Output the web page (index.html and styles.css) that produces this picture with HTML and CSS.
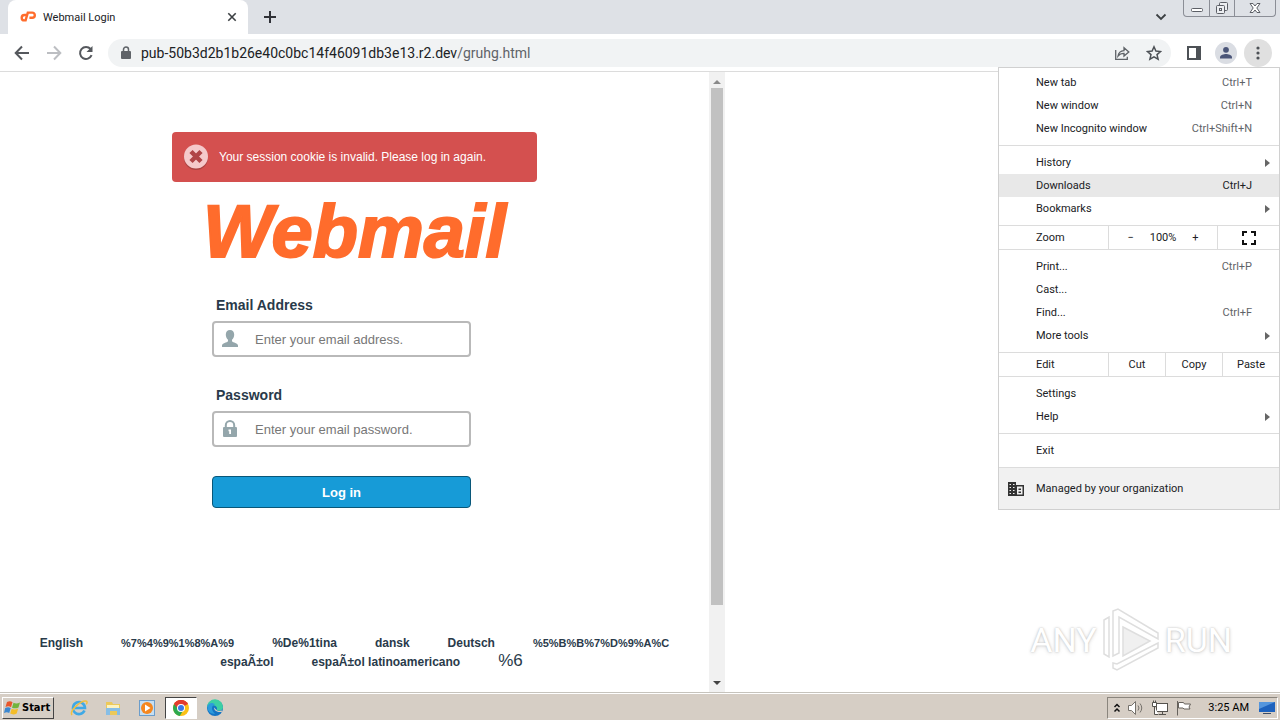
FILE: index.html
```html
<!DOCTYPE html>
<html lang="en">
<head>
    <meta charset="UTF-8">
    <meta name="viewport" content="width=device-width, initial-scale=1.0">
    <title>Webmail Login</title>
    <link rel="stylesheet" href="styles.css">
</head>
<body>
    <div class="browser">
        <!-- Tab strip -->
        <header class="tabstrip">
            <div class="tab">
                <svg class="favicon" width="16" height="16" viewBox="0 0 16 16" fill="none" stroke="#ff6c2c" stroke-width="2.4">
                    <path d="M6.6 6H4.400a2.700 2.700 0 0 0 0 5.400h1.200L7.800 3.600h4.400a2.500 2.500 0 0 1 0 5.200H9.400"/>
                </svg>
                <span class="tab-title">Webmail Login</span>
                <button class="icon-btn" aria-label="Close tab">
                    <svg width="10" height="10" viewBox="0 0 10 10" stroke="#3c4043" stroke-width="1.6"><path d="M1.300 1.300l7.400 7.400M8.700 1.300L1.300 8.700"/></svg>
                </button>
            </div>
            <button class="icon-btn new-tab" aria-label="New tab">
                <svg width="14" height="14" viewBox="0 0 14 14" stroke="#303238" stroke-width="2"><path d="M7 1v12M1 7h12"/></svg>
            </button>
            <button class="icon-btn tab-search" aria-label="Search tabs">
                <svg width="12" height="8" viewBox="0 0 12 8" fill="none" stroke="#3c4043" stroke-width="1.8"><path d="M1.500 1.500L6 6l4.500-4.500"/></svg>
            </button>
            <div class="window-buttons">
                <button aria-label="Minimize">
                    <svg width="14" height="14" viewBox="0 0 14 14" fill="#fff" stroke="#5c5f66"><rect x="1.500" y="7.500" width="11" height="3" rx="1"/></svg>
                </button>
                <button aria-label="Restore">
                    <svg width="14" height="14" viewBox="0 0 14 14" fill="#eceef1" stroke="#5c5f66"><rect x="4.500" y="1.500" width="8" height="8" rx="1"/><rect x="1.500" y="4.500" width="8" height="8" rx="1"/><rect x="4.500" y="7.500" width="2" height="2"/></svg>
                </button>
                <button class="wide" aria-label="Close">
                    <svg width="14" height="14" viewBox="0 0 14 14" fill="#fff" stroke="#5c5f66"><path d="M2 2.500h3l2 2.500 2-2.500h3L8.800 7l3.200 4.500H9L7 9l-2 2.500H2L5.200 7z"/></svg>
                </button>
            </div>
        </header>

        <!-- Toolbar -->
        <div class="toolbar">
            <button class="nav-btn" aria-label="Back">
                <svg width="16" height="16" viewBox="0 0 16 16" fill="none" stroke="#55585d" stroke-width="2"><path d="M15 8H2M8 1.500L1.700 8 8 14.500"/></svg>
            </button>
            <button class="nav-btn" aria-label="Forward">
                <svg width="16" height="16" viewBox="0 0 16 16" fill="none" stroke="#bcbec2" stroke-width="2"><path d="M1 8h13M8 1.500L14.300 8 8 14.500"/></svg>
            </button>
            <button class="nav-btn" aria-label="Reload">
                <svg width="16" height="16" viewBox="0 0 16 16" fill="none" stroke="#55585d" stroke-width="2"><path d="M13.600 10.200A6 6 0 1 1 12.600 4"/><path d="M14.500 1v6h-6z" fill="#55585d" stroke="none"/></svg>
            </button>
            <div class="omnibox">
                <svg width="10" height="14" viewBox="0 0 10 14"><rect y="5" width="10" height="8" rx="1" fill="#5f6368"/><path d="M2.500 6V3.500a2.500 2.500 0 0 1 5 0V6" fill="none" stroke="#5f6368" stroke-width="1.500"/></svg>
                <span class="url">pub-50b3d2b1b26e40c0bc14f46091db3e13.r2.dev<span class="path">/gruhg.html</span></span>
                <button class="icon-btn" aria-label="Share">
                    <svg width="16" height="16" viewBox="0 0 16 16" fill="none" stroke="#5f6368" stroke-width="1.300"><path d="M1.700 5v9.300h11.600v-2.500"/><path d="M4 11c.6-3.600 2.600-5.200 6-5.400V2.800L14.800 7 10 11V8.400c-2.600 0-4.400.6-6 2.600z"/></svg>
                </button>
                <button class="icon-btn" aria-label="Bookmark this tab">
                    <svg width="16" height="16" viewBox="0 0 16 16" fill="none" stroke="#4d5156" stroke-width="1.500"><path d="M8 1.800l1.900 4.300 4.600.4-3.500 3.100 1.100 4.600L8 11.800l-4.100 2.400L5 9.600 1.500 6.500l4.600-.4z"/></svg>
                </button>
            </div>
            <button class="nav-btn" aria-label="Side panel">
                <svg width="14" height="14" viewBox="0 0 14 14"><path d="M0 0h14v14H0zM2 2v10h7V2z" fill="#4d5156" fill-rule="evenodd"/></svg>
            </button>
            <button class="nav-btn" aria-label="Profile">
                <svg width="22" height="22" viewBox="0 0 22 22"><circle cx="11" cy="11" r="11" fill="#dadde3"/><circle cx="11" cy="7.800" r="2.900" fill="#4a5578"/><path d="M5 16.500v-1.300c0-2.200 4-3.300 6-3.300s6 1.100 6 3.300v1.300z" fill="#4a5578"/></svg>
            </button>
            <button class="nav-btn more" aria-label="Menu" aria-expanded="true">
                <svg width="4" height="14" viewBox="0 0 4 14" fill="#4d5156"><circle cx="2" cy="2" r="1.600"/><circle cx="2" cy="7" r="1.600"/><circle cx="2" cy="12" r="1.600"/></svg>
            </button>
        </div>

        <!-- Page -->
        <div class="viewport">
            <main class="page">
                <div class="content">
                    <div class="alert" role="alert">
                        <svg width="26" height="28" viewBox="0 0 26 28"><circle cx="13" cy="15" r="12" fill="#8f3a3a" opacity=".6"/><circle cx="13" cy="13.500" r="12" fill="#f5c9cb"/><path d="M8 8.500l10 10M18 8.500l-10 10" stroke="#b04447" stroke-width="4.500"/></svg>
                        <span>Your session cookie is invalid. Please log in again.</span>
                    </div>
                    <h1 class="logo">Webmail</h1>
                    <form class="login" onsubmit="return false">
                        <label for="user">Email Address</label>
                        <div class="field">
                            <svg width="16" height="18" viewBox="0 0 16 18" fill="#94a6ab"><path d="M8 0c2.700 0 4.200 1.800 4.200 4.500 0 2-.8 4-2.200 5.200v1.500c1 1.500 6 1.700 6 4.300V17H0v-1.500c0-2.600 5-2.800 6-4.300V9.700C4.600 8.500 3.800 6.500 3.800 4.500 3.800 1.800 5.300 0 8 0z"/></svg>
                            <input id="user" type="text" placeholder="Enter your email address.">
                        </div>
                        <label for="pass">Password</label>
                        <div class="field">
                            <svg width="16" height="18" viewBox="0 0 16 18"><rect x="1" y="7" width="14" height="10" rx="1" fill="#94a6ab"/><path d="M3.800 8V5.200a4.200 4.200 0 0 1 8.400 0V8" fill="none" stroke="#94a6ab" stroke-width="2"/><path d="M6.500 9.500H9V14H7.200v-2.800h-.7z" fill="#fff"/></svg>
                            <input id="pass" type="password" placeholder="Enter your email password.">
                        </div>
                        <button class="login-btn" type="submit">Log in</button>
                    </form>
                </div>
                <footer class="locales">
                    <div class="locale-row">
                        <a href="#">English</a>
                        <a class="coded" href="#">%7%4%9%1%8%A%9</a>
                        <a href="#">%De%1tina</a>
                        <a href="#">dansk</a>
                        <a href="#">Deutsch</a>
                        <a class="coded" href="#">%5%B%B%7%D%9%A%C</a>
                    </div>
                    <div class="locale-row last">
                        <a href="#">espaÃ±ol</a>
                        <a href="#">espaÃ±ol latinoamericano</a>
                        <a class="big" href="#">%6</a>
                    </div>
                </footer>
            </main>
            <div class="scrollbar">
                <span class="arrow up"></span>
                <div class="track"><div class="thumb"></div></div>
                <span class="arrow down"></span>
            </div>
        </div>

        <!-- Browser menu -->
        <nav class="menu">
            <div class="group first">
                <button>New tab <kbd>Ctrl+T</kbd></button>
                <button>New window <kbd>Ctrl+N</kbd></button>
                <button>New Incognito window <kbd>Ctrl+Shift+N</kbd></button>
            </div>
            <div class="group">
                <button class="sub">History</button>
                <button class="active">Downloads <kbd>Ctrl+J</kbd></button>
                <button class="sub">Bookmarks</button>
            </div>
            <div class="row">
                <span class="row-label">Zoom</span>
                <div class="zoom">
                    <button aria-label="Zoom out">−</button>
                    <span>100%</span>
                    <button aria-label="Zoom in">+</button>
                </div>
                <button class="full" aria-label="Full screen">
                    <svg width="14" height="14" viewBox="0 0 14 14" fill="none" stroke="#111" stroke-width="2"><path d="M1 5V1h4M9 1h4v4M13 9v4H9M5 13H1V9"/></svg>
                </button>
            </div>
            <div class="group">
                <button>Print... <kbd>Ctrl+P</kbd></button>
                <button>Cast...</button>
                <button>Find... <kbd>Ctrl+F</kbd></button>
                <button class="sub">More tools</button>
            </div>
            <div class="row">
                <span class="row-label">Edit</span>
                <button class="edit">Cut</button>
                <button class="edit">Copy</button>
                <button class="edit">Paste</button>
            </div>
            <div class="group">
                <button>Settings</button>
                <button class="sub">Help</button>
            </div>
            <div class="group">
                <button>Exit</button>
            </div>
            <div class="managed">
                <svg width="16" height="14" viewBox="0 0 16 14"><path d="M0 0h8v3h8v11H0z" fill="#333"/><path d="M1.500 2H3v1H1.500zM5 2h1.500v1H5zM1.500 5H3v1H1.500zM5 5h1.500v1H5zM1.500 8H3v1H1.500zM5 8h1.500v1H5zM1.500 11H3v1H1.500zM5 11h1.500v1H5zM9 4.500h5.500v8H9z" fill="#f1f1f1"/><path d="M10.500 6.500H13V8h-2.500zM10.500 9.500H13V11h-2.500z" fill="#333"/></svg>
                <span>Managed by your organization</span>
            </div>
        </nav>

        <div class="watermark">
            <span>ANY</span>
            <svg width="58" height="64" viewBox="0 0 58 64" fill="#fff" stroke="#dedede" stroke-width="1.500">
                <path d="M2 12l5-3v40l-5-3z"/>
                <path d="M11 3l5-2 40 24v6L17 9v36l-6 3z"/>
                <path d="M21 19l27 14-27 15z" fill="#f0f0f0"/>
                <path d="M56 35v5L15 62l-4-2v-5l4 1z"/>
            </svg>
            <span>RUN</span>
        </div>
    </div>

    <!-- Taskbar -->
    <div class="taskbar">
        <button class="start">
            <svg width="17" height="16" viewBox="0 0 17 16"><path d="M3 2c2-1 4-1 5.500.2L7 7.200C5.500 6 3.500 6 1.500 7z" fill="#e8562a"/><path d="M9.500 2.800c2 1 4 1 6.500-.3l-1.500 5c-2.500 1.200-4.500 1-6.500.2z" fill="#72b43c"/><path d="M1.200 8c2-1 4-1 5.500.2L5.200 13C3.700 12 2 12 0 13z" fill="#3b87d0"/><path d="M7.700 8.800c2 1 4 1 6.500-.2l-1.500 5c-2.500 1.200-4.500 1-6.500 0z" fill="#f4bd29"/></svg>
            Start
        </button>
        <div class="quick">
            <button aria-label="Internet Explorer">
                <svg width="18" height="18" viewBox="0 0 18 18" fill="none"><path d="M14.500 11.500A6 6 0 1 1 15 9H5" stroke="#3fa9e6" stroke-width="2.600"/><path d="M2 16C-1 12 11 1 16.500 2.200c1 .6.500 2-.3 3" stroke="#f0c040" stroke-width="1.500"/></svg>
            </button>
            <button aria-label="Explorer">
                <svg width="18" height="18" viewBox="0 0 18 18"><path d="M2 3h6l1 2h7v11H2z" fill="#ecc95a"/><path d="M3 6h12v4H3z" fill="#fdf3bf"/><path d="M2 9h14v7h-3v-4H6v4H2z" fill="#87bee6"/></svg>
            </button>
            <button aria-label="Media Player">
                <svg width="18" height="18" viewBox="0 0 18 18"><rect x="1.500" y="1.500" width="15" height="15" fill="#c6dff2" stroke="#6b9dcb"/><circle cx="9" cy="9" r="6" fill="#f5871f"/><path d="M7 5.500v7L12.500 9z" fill="#fff"/></svg>
            </button>
            <button class="on" aria-label="Chrome">
                <svg width="18" height="18" viewBox="0 0 18 18"><circle cx="9" cy="9" r="8" fill="#fbc116"/><path d="M9 9L2.100 5a8 8 0 0 1 13.800 0z" fill="#e33b2e"/><path d="M9 9L2.100 5a8 8 0 0 0 5.700 11.900L12 10z" fill="#2da94f"/><path d="M2.100 5a8 8 0 0 1 13.800 0H9L6 10z" fill="#e33b2e"/><circle cx="9" cy="9" r="4" fill="#fff"/><circle cx="9" cy="9" r="3" fill="#3b78e7"/></svg>
            </button>
            <button aria-label="Edge">
                <svg width="18" height="18" viewBox="0 0 18 18"><circle cx="9" cy="9" r="8" fill="#1474c4"/><path d="M1 8a8 8 0 0 1 16 .5c0 3-4 4-6.500 2.500 1-1 .8-4-2.500-4.500-3-.4-6 0-7 1.500z" fill="#3ccfa4"/><path d="M1.500 7.500C3 3 7 3.500 9 5.500 5 6 5 12 9 14.500c-4 1-7.800-2-7.500-7z" fill="#2c9bdc"/><path d="M8 8.500c0 3 3 5 7.500 4.500 1-.5 1-1.300 0-1.500-2 .8-4 .6-5-.5z" fill="#d6cec5"/></svg>
            </button>
        </div>
        <div class="tray">
            <svg width="8" height="10" viewBox="0 0 8 10" fill="none" stroke="#111" stroke-width="1.500"><path d="M1.500 4L4 1.500 6.500 4M1.500 8.500L4 6l2.500 2.500"/></svg>
            <svg width="18" height="16" viewBox="0 0 18 16" fill="#fff" stroke="#75716b"><path d="M1.500 5.500h3l4-4v13l-4-4h-3z"/><path d="M11 5.500q2 2.500 0 5M13 3.500q3.500 4.500 0 9" fill="none"/></svg>
            <svg width="18" height="16" viewBox="0 0 18 16" fill="#fff" stroke="#55524d"><rect x="5.500" y="3.500" width="11" height="8"/><path d="M8 14.500h7M11.500 12v2" /><path d="M1.500 2.500h4v4h-4zM2.500.500v2M4.500.500v2M3.500 6.500v8h4"/></svg>
            <svg width="18" height="16" viewBox="0 0 18 16" fill="#fff" stroke="#66625c"><path d="M2.500 1v14.500M3.500 2.500h5l1 1.500h6l-1.500 3 1 2h-6l-1-1h-4.500z"/></svg>
            <time>3:25 AM</time>
            <svg width="16" height="14" viewBox="0 0 16 14"><path d="M0 1h16v10H0z" fill="#1e62bd"/><path d="M0 1h16L0 8z" fill="#5596dd"/><path d="M4 12h8v1H4z" fill="#3a4c66"/></svg>
        </div>
    </div>
</body>
</html>
```
FILE: styles.css
```css
* {
    box-sizing: border-box;
}
body {
    margin: 0;
    height: 100vh;
    display: flex;
    flex-direction: column;
    overflow: hidden;
    background: #fff;
    color: #202124;
    font-family: Roboto, sans-serif;
    font-size: 11px;
}
button {
    margin: 0;
    padding: 0;
    border: none;
    background: none;
    color: inherit;
    font: inherit;
}
svg {
    display: block;
    flex-shrink: 0;
}
.browser {
    flex: 1;
    min-height: 0;
    display: flex;
    flex-direction: column;
    position: relative;
}

/* tab strip */
.tabstrip {
    display: flex;
    align-items: center;
    height: 34px;
    padding: 0 4px 0 8px;
    background: #dee1e6;
}
.tab {
    display: flex;
    align-items: center;
    gap: 7px;
    width: 240px;
    height: 34px;
    padding: 0 11px 0 12px;
    background: #fff;
    border-radius: 8px 8px 0 0;
}
.tab-title {
    flex: 1;
}
.icon-btn {
    display: flex;
    align-items: center;
    justify-content: center;
}
.new-tab {
    margin-left: 15px;
}
.tab-search {
    margin-left: auto;
    margin-right: 16px;
}
.window-buttons {
    display: flex;
    align-self: flex-start;
    height: 17px;
    border: 1px solid #8b8e96;
    border-top: none;
    border-radius: 0 0 4px 4px;
}
.window-buttons button {
    display: flex;
    align-items: center;
    justify-content: center;
    width: 25px;
}
.window-buttons button + button {
    border-left: 1px solid #8b8e96;
}
.window-buttons .wide {
    width: 41px;
}

/* toolbar */
.toolbar {
    display: flex;
    align-items: center;
    gap: 4px;
    height: 38px;
    padding: 0 8px;
    border-bottom: 1px solid #dcdcdc;
}
.nav-btn {
    display: flex;
    align-items: center;
    justify-content: center;
    width: 28px;
    height: 28px;
    border-radius: 14px;
}
.more {
    background: #e0e0e0;
}
.omnibox {
    flex: 1;
    display: flex;
    align-items: center;
    gap: 16px;
    height: 28px;
    margin: 0 5px 0 4px;
    padding: 0 9px 0 13px;
    border-radius: 14px;
    background: #f1f3f4;
}
.url {
    flex: 1;
    margin-left: -6px;
    font-size: 14px;
}
.path {
    color: #5f6368;
}

/* page */
.viewport {
    flex: 1;
    min-height: 0;
    display: flex;
    width: calc(50% + 85px);
}
.page {
    flex: 1;
    display: flex;
    flex-direction: column;
    align-items: center;
    justify-content: space-between;
    padding: 60px 20px 21px;
    color: #293a4a;
    font-family: "Liberation Sans", Arial, sans-serif;
}
.content {
    width: 100%;
    max-width: 365px;
}
.alert {
    display: flex;
    align-items: center;
    gap: 10px;
    height: 50px;
    padding: 0 11px;
    border-radius: 4px;
    background: #d4504f;
    color: #fff;
    font-size: 12px;
}
.logo {
    margin: 16px 0 30px;
    color: #ff6c2c;
    font-size: 74px;
    font-style: italic;
    line-height: 68px;
    text-align: center;
    -webkit-text-stroke: 2px #ff6c2c;
}
.login {
    width: 259px;
    margin-left: 40px;
}
.login label {
    display: block;
    padding: 0 4px;
    font-size: 14px;
    font-weight: bold;
    line-height: 18px;
}
.field {
    display: flex;
    align-items: center;
    gap: 17px;
    height: 36px;
    margin: 7px 0 29px;
    padding: 0 8px;
    border: 2px solid #b9b9b9;
    border-radius: 4px;
}
.field input {
    flex: 1;
    min-width: 0;
    padding: 0;
    border: none;
    outline: none;
    background: none;
    font-family: inherit;
    font-size: 13px;
}
.field input::placeholder {
    color: #777;
}
.login-btn {
    display: block;
    width: 100%;
    height: 32px;
    border: 1px solid #095779;
    border-radius: 4px;
    background: #179bd7;
    color: #fff;
    font-size: 13px;
    font-weight: bold;
}
.locales {
    font-size: 12px;
    font-weight: bold;
}
.locale-row {
    display: flex;
    align-items: baseline;
    justify-content: center;
    gap: 38px;
    line-height: 18px;
}
.locale-row.last {
    padding-left: 34px;
}
.locale-row a {
    color: inherit;
    text-decoration: none;
    white-space: nowrap;
}
.locale-row .coded {
    font-size: 11px;
}
.locale-row .big {
    font-size: 17px;
    font-weight: normal;
}
.scrollbar {
    display: flex;
    flex-direction: column;
    align-items: center;
    width: 16px;
    padding: 6px 0;
    background: #f1f1f1;
}
.arrow {
    border: 4px solid transparent;
}
.up {
    border-top-width: 0;
    border-bottom-color: #8a8a8a;
    margin: 2px 0 4px;
}
.down {
    border-bottom-width: 0;
    border-top-color: #444;
    margin: 5px 0 1px;
}
.track {
    flex: 1;
    width: 12px;
}
.thumb {
    height: 88%;
    background: #c1c1c1;
}

/* browser menu */
.menu {
    position: absolute;
    top: 67px;
    right: 0;
    width: 282px;
    border: 1px solid #d0d0d0;
    background: #fff;
}
.group {
    padding: 5px 0;
}
.group.first {
    padding-top: 3px;
}
.group + .group,
.managed {
    border-top: 1px solid #dcdcdc;
}
.group button {
    display: flex;
    align-items: center;
    justify-content: space-between;
    width: 100%;
    height: 23px;
    padding: 0 27px 0 37px;
}
.group kbd {
    color: #5f6368;
    font: inherit;
}
.group .active {
    background: #e8e8e8;
}
.active kbd {
    color: inherit;
}
.group .sub {
    padding-right: 9px;
}
.sub::after {
    content: "";
    border: 4px solid transparent;
    border-left: 5px solid #666;
    border-right: none;
}
.row {
    display: flex;
    height: 25px;
    border: solid #dcdcdc;
    border-width: 1px 0;
}
.row-label {
    flex: 1;
    padding-left: 37px;
    line-height: 24px;
}
.zoom {
    display: flex;
    align-items: center;
    justify-content: center;
    gap: 16px;
    width: 109px;
    border-left: 1px solid #dcdcdc;
}
.full {
    display: flex;
    align-items: center;
    justify-content: center;
    width: 62px;
    border-left: 1px solid #dcdcdc;
}
.edit {
    width: 57px;
    border-left: 1px solid #dcdcdc;
}
.managed {
    display: flex;
    align-items: center;
    gap: 12px;
    height: 42px;
    padding: 0 9px;
    background: #f1f1f1;
}
.watermark {
    position: absolute;
    right: 48px;
    bottom: 20px;
    display: flex;
    align-items: center;
    gap: 5px;
    color: #fff;
    font-family: Roboto, sans-serif;
    font-size: 34px;
    text-shadow: 0 0 2px #bbb, 0 1px 4px #ddd;
}

/* taskbar */
.taskbar {
    display: flex;
    align-items: center;
    height: 28px;
    padding: 2px 2px 0;
    border-top: 1px solid #c6c3bc;
    background: #d6cec5;
    box-shadow: inset 0 1px #fff;
    color: #000;
}
.start {
    display: flex;
    align-items: center;
    gap: 1px;
    width: 52px;
    height: 22px;
    padding-left: 1px;
    border: 1px solid;
    border-color: #fff #444 #444 #fff;
    font-family: "DejaVu Sans Condensed", sans-serif;
    font-weight: bold;
}
.quick {
    display: flex;
    gap: 2px;
    margin-left: 9px;
}
.quick button {
    display: flex;
    align-items: center;
    justify-content: center;
    width: 32px;
    height: 22px;
}
.quick .on {
    border: 1px solid;
    border-color: #444 #fff #fff #444;
    background: #fff;
}
.tray {
    display: flex;
    align-items: center;
    gap: 6px;
    height: 22px;
    margin-left: auto;
    padding: 0 2px 0 5px;
    border: 1px solid;
    border-color: #8a857d #fff #fff #8a857d;
}
.tray time {
    margin: 0 4px 0 9px;
}
```
